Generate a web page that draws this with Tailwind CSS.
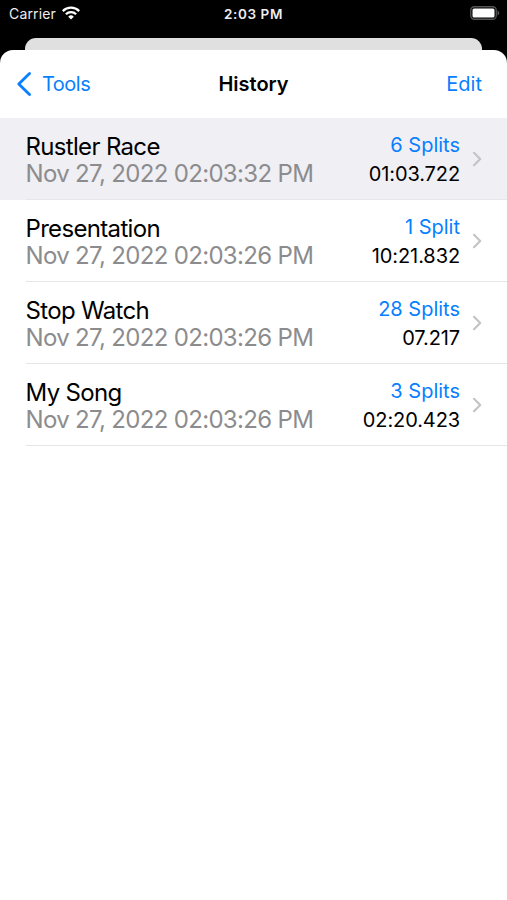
<!DOCTYPE html>
<html lang="en">
<head>
    <meta charset="UTF-8">
    <title>History</title>
    <script src="https://cdn.jsdelivr.net/npm/@tailwindcss/browser@4"></script>
</head>
<body class="bg-black h-[900px] overflow-hidden font-['Inter',sans-serif] flex flex-col">
    <!-- Status bar -->
    <header class="h-[38px] shrink-0 grid grid-cols-3 pl-[9px] pr-[7px] pt-1 text-[#eee] text-[13.5px] leading-5">
        <div class="flex items-start gap-1.5">
            <span class="text-[14px] tracking-[0.15px]">Carrier</span>
            <svg class="mt-[2px]" width="18" height="14" viewBox="0 0 18 14" fill="none" stroke="white" stroke-width="2.3">
                <path d="M.8 5.1a11.6 11.6 0 0 1 16.4 0"/>
                <path d="M3.9 8.3a7.2 7.2 0 0 1 10.2 0"/>
                <path d="M9 13.5 6.2 10.7a4 4 0 0 1 5.6 0z" fill="white" stroke="none"/>
            </svg>
        </div>
        <span class="text-center font-semibold tracking-[0.6px] -ml-0.5">2:03 PM</span>
        <div class="flex justify-end">
            <svg class="mt-[2px]" width="30" height="14" viewBox="0 0 30 14">
                <rect x="0.75" y="0.75" width="25.5" height="12.5" rx="3.5" fill="none" stroke="#555" stroke-width="1.3"/>
                <rect x="2.5" y="2.5" width="22" height="9" rx="1.5" fill="white"/>
                <path d="M27.5 4.5v5q1.8-.8 1.8-2.500t-1.8-2.500" fill="#555"/>
            </svg>
        </div>
    </header>

    <div class="h-3 shrink-0 mx-[25px] bg-[#e0e0e0] rounded-t-[11px]"></div>

    <main class="grow bg-white rounded-t-[13px]">
        <nav class="h-[68px] grid grid-cols-3 items-center px-[17px] text-[20px] text-[#087fff]">
            <a class="flex items-center gap-[11px] tracking-[-0.5px]">
                <svg width="14" height="24" viewBox="0 0 14 24" fill="none" stroke="currentColor" stroke-width="2.8" stroke-linecap="round" stroke-linejoin="round"><path d="M12.5 1.5 1.8 12l10.7 10.5"/></svg>
                Tools
            </a>
            <h1 class="text-center text-black font-semibold">History</h1>
            <a class="text-right pr-2">Edit</a>
        </nav>
        <ul id="history"></ul>
    </main>

    <script>
        const items = [
            ['Rustler Race', 'Nov 27, 2022 02:03:32 PM', '6 Splits', '01:03.722'],
            ['Presentation', 'Nov 27, 2022 02:03:26 PM', '1 Split', '10:21.832'],
            ['Stop Watch', 'Nov 27, 2022 02:03:26 PM', '28 Splits', '07.217'],
            ['My Song', 'Nov 27, 2022 02:03:26 PM', '3 Splits', '02:20.423'],
        ];

        document.getElementById('history').innerHTML = items.map(([name, date, splits, time]) => `
            <li class="h-[82px] pl-[26px] first:bg-[#efeff4]">
                <div class="h-full flex items-center pr-[25px] pt-0.5 border-b border-[#e6e6e8]">
                    <div class="grow -ml-[0.5px] whitespace-nowrap text-[24px] leading-[27px] tracking-[-0.67px]">
                        <p>${name}</p>
                        <p class="text-[#8c8c8e]">${date}</p>
                    </div>
                    <div class="text-right whitespace-nowrap text-[20px] leading-[29px]">
                        <p class="text-[#087fff]">${splits}</p>
                        <p class="tracking-[-0.1px]">${time}</p>
                    </div>
                    <svg class="ml-3 mb-0.5 shrink-0" width="10" height="16" viewBox="0 0 10 16" fill="none" stroke="#c4c4c7" stroke-width="2.2" stroke-linecap="round" stroke-linejoin="round"><path d="M2 1.8 8.2 8 2 14.2"/></svg>
                </div>
            </li>`).join('');
    </script>
</body>
</html>
